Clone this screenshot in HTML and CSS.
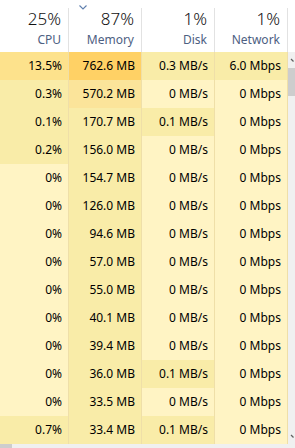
FILE: index.html
```html
<!DOCTYPE html>
<html lang="en">
<head>
  <meta charset="UTF-8">
  <title>Task Manager</title>
  <link rel="stylesheet" href="styles.css">
</head>
<body>

<div class="tm">
  <div class="head">
    <div class="hcell"><div class="val">25%</div><div class="lbl">CPU</div></div>
    <div class="hcell sorted">
      <svg class="chev" width="8" height="5" viewBox="0 0 8 5"><path d="M0.5 0.5 L4 4 L7.5 0.5" fill="none" stroke="#5f7fae" stroke-width="1.1"/></svg>
      <div class="val">87%</div><div class="lbl">Memory</div>
    </div>
    <div class="hcell"><div class="val">1%</div><div class="lbl">Disk</div></div>
    <div class="hcell"><div class="val">1%</div><div class="lbl">Network</div></div>
    <div class="hpad"></div>
  </div>

  <div class="body">
    <div class="rows">
      <div class="row"><div class="c h2">13.5%</div><div class="c h3">762.6 MB</div><div class="c h1">0.3 MB/s</div><div class="c h1">6.0 Mbps</div></div>
      <div class="row"><div class="c h1">0.3%</div><div class="c h2m">570.2 MB</div><div class="c h0">0 MB/s</div><div class="c h0">0 Mbps</div></div>
      <div class="row"><div class="c h1">0.1%</div><div class="c h1">170.7 MB</div><div class="c h1">0.1 MB/s</div><div class="c h0">0 Mbps</div></div>
      <div class="row"><div class="c h1">0.2%</div><div class="c h1">156.0 MB</div><div class="c h0">0 MB/s</div><div class="c h0">0 Mbps</div></div>
      <div class="row"><div class="c h0">0%</div><div class="c h1">154.7 MB</div><div class="c h0">0 MB/s</div><div class="c h0">0 Mbps</div></div>
      <div class="row"><div class="c h0">0%</div><div class="c h1">126.0 MB</div><div class="c h0">0 MB/s</div><div class="c h0">0 Mbps</div></div>
      <div class="row"><div class="c h0">0%</div><div class="c h1">94.6 MB</div><div class="c h0">0 MB/s</div><div class="c h0">0 Mbps</div></div>
      <div class="row"><div class="c h0">0%</div><div class="c h1">57.0 MB</div><div class="c h0">0 MB/s</div><div class="c h0">0 Mbps</div></div>
      <div class="row"><div class="c h0">0%</div><div class="c h1">55.0 MB</div><div class="c h0">0 MB/s</div><div class="c h0">0 Mbps</div></div>
      <div class="row"><div class="c h0">0%</div><div class="c h1">40.1 MB</div><div class="c h0">0 MB/s</div><div class="c h0">0 Mbps</div></div>
      <div class="row"><div class="c h0">0%</div><div class="c h1">39.4 MB</div><div class="c h0">0 MB/s</div><div class="c h0">0 Mbps</div></div>
      <div class="row"><div class="c h0">0%</div><div class="c h1">36.0 MB</div><div class="c h1">0.1 MB/s</div><div class="c h0">0 Mbps</div></div>
      <div class="row"><div class="c h0">0%</div><div class="c h1">33.5 MB</div><div class="c h0">0 MB/s</div><div class="c h0">0 Mbps</div></div>
      <div class="row"><div class="c h1">0.7%</div><div class="c h1">33.4 MB</div><div class="c h1">0.1 MB/s</div><div class="c h0">0 Mbps</div></div>
    </div>

    <!-- vertical scrollbar, cropped -->
    <div class="vscroll">
      <svg class="arrow" width="7" height="16" viewBox="0 0 7 16"><path d="M3 7 L5.5 9.5" fill="none" stroke="#606060" stroke-width="1.2"/></svg>
      <div class="thumb"></div>
      <div class="track"></div>
      <svg class="arrow" width="7" height="16" viewBox="0 0 7 16"><path d="M3 7 L5.5 9.5" fill="none" stroke="#606060" stroke-width="1.2"/></svg>
    </div>
  </div>

  <div class="hscroll"><div class="hthumb"></div></div>
</div>

</body>
</html>
```

FILE: styles.css
```css
body {
  margin: 0;
  background: #fff;
  font-family: "Segoe UI", "Noto Sans", "Open Sans", sans-serif;
  color: #000;
}
.tm {
  width: 295px;
  height: 448px;
  overflow: hidden;
  display: flex;
  flex-direction: column;
}
.head {
  display: flex;
  height: 52px;
  padding-top: 8px;
  box-sizing: border-box;
}
.hcell {
  position: relative;
  width: 73px;
  border-right: 1px solid #e2e2e2;
  box-sizing: border-box;
  text-align: right;
  padding-right: 7px;
}
.hcell:first-child {
  width: 69px;
}
.hpad {
  flex: 1;
}
.val {
  font-size: 17px;
  line-height: 22px;
  font-weight: 300;
  color: #111;
}
.lbl {
  font-size: 12px;
  line-height: 16px;
  margin-top: 2px;
  color: #4d6082;
}
.chev {
  position: absolute;
  left: 10px;
  top: -3px;
}
.body {
  display: flex;
  flex: 1;
}
.rows {
  display: flex;
  flex-direction: column;
}
.row {
  display: flex;
  height: 28px;
}
.c {
  width: 73px;
  border-right: 1px solid #efdfa8;
  box-sizing: border-box;
  text-align: right;
  padding-right: 6px;
  font-size: 12px;
  line-height: 28px;
}
.c:first-child {
  width: 69px;
}
.h0 { background: #fff4c4; }
.h1 { background: #f9eca8; }
.h2m { background: #fbe49a; }
.h2 { background: #fde28c; }
.h3 { background: #ffd165; }
.vscroll {
  flex: 1;
  background: #f0f0f0;
  display: flex;
  flex-direction: column;
}
.arrow {
  display: block;
  flex: none;
}
.thumb {
  height: 28px;
  background: #cdcdcd;
}
.track {
  flex: 1;
}
.hscroll {
  height: 4px;
  background: #f0f0f0;
}
.hthumb {
  width: 12px;
  height: 4px;
  background: #cdcdcd;
}
```
